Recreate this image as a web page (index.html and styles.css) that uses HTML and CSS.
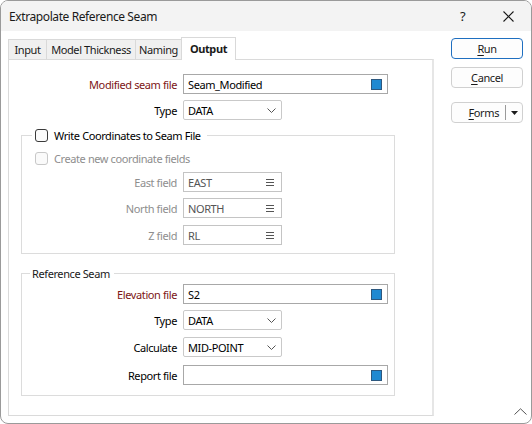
FILE: index.html
```html
<!DOCTYPE html>
<html>
<head>
<meta charset="utf-8">
<title>Extrapolate Reference Seam</title>
<link rel="stylesheet" href="styles.css">
</head>
<body>
<div class="window">
  <div class="titlebar">
    <span class="title">Extrapolate Reference Seam</span>
    <span class="tb-help">?</span>
    <span class="tb-close"><svg width="11" height="11" viewBox="0 0 11 11"><path d="M0.5 0.5 L10.5 10.5 M10.5 0.5 L0.5 10.5" stroke="#1a1a1a" stroke-width="1.1" fill="none"/></svg></span>
  </div>
  <div class="client">
    <div class="main">
      <div class="tabs">
        <div class="tab t-input">Input</div>
        <div class="tab t-model">Model Thickness</div>
        <div class="tab t-naming">Naming</div>
        <div class="tab t-output active">Output</div>
      </div>
      <div class="panel">
        <div class="row r1">
          <span class="lbl req">Modified seam file</span>
          <div class="file"><span class="val">Seam_Modified</span><i class="browse"></i></div>
        </div>
        <div class="row r2">
          <span class="lbl">Type</span>
          <div class="select"><span class="val">DATA</span><svg class="chev" width="9" height="5" viewBox="0 0 9 5"><path d="M0.5 0.5 L4.5 4.5 L8.5 0.5" stroke="#555" fill="none"/></svg></div>
        </div>

        <fieldset class="group g1">
          <legend class="legend chk-legend"><span class="cb"></span><span>Write Coordinates to Seam File</span></legend>
          <div class="cbrow disabled"><span class="cb"></span><span>Create new coordinate fields</span></div>
          <div class="row g-row e-row">
            <span class="lbl glbl dis">East field</span>
            <div class="fld"><span class="val">EAST</span><svg class="list" width="8" height="7" viewBox="0 0 8 7"><path d="M0 0.5H8M0 3.5H8M0 6.5H8" stroke="#555" fill="none"/></svg></div>
          </div>
          <div class="row g-row n-row">
            <span class="lbl glbl dis">North field</span>
            <div class="fld"><span class="val">NORTH</span><svg class="list" width="8" height="7" viewBox="0 0 8 7"><path d="M0 0.5H8M0 3.5H8M0 6.5H8" stroke="#555" fill="none"/></svg></div>
          </div>
          <div class="row g-row z-row">
            <span class="lbl glbl dis">Z field</span>
            <div class="fld"><span class="val">RL</span><svg class="list" width="8" height="7" viewBox="0 0 8 7"><path d="M0 0.5H8M0 3.5H8M0 6.5H8" stroke="#555" fill="none"/></svg></div>
          </div>
        </fieldset>

        <fieldset class="group g2">
          <legend class="legend txt-legend">Reference Seam</legend>
          <div class="row g-row el-row">
            <span class="lbl glbl req">Elevation file</span>
            <div class="file"><span class="val">S2</span><i class="browse"></i></div>
          </div>
          <div class="row g-row ty-row">
            <span class="lbl glbl">Type</span>
            <div class="select"><span class="val">DATA</span><svg class="chev" width="9" height="5" viewBox="0 0 9 5"><path d="M0.5 0.5 L4.5 4.5 L8.5 0.5" stroke="#555" fill="none"/></svg></div>
          </div>
          <div class="row g-row ca-row">
            <span class="lbl glbl">Calculate</span>
            <div class="select"><span class="val">MID-POINT</span><svg class="chev" width="9" height="5" viewBox="0 0 9 5"><path d="M0.5 0.5 L4.5 4.5 L8.5 0.5" stroke="#555" fill="none"/></svg></div>
          </div>
          <div class="row g-row re-row">
            <span class="lbl glbl">Report file</span>
            <div class="file"><span class="val"></span><i class="browse"></i></div>
          </div>
        </fieldset>
      </div>
    </div>
    <div class="buttons">
      <div class="btn default"><u>R</u>un</div>
      <div class="btn cancel"><u>C</u>ancel</div>
      <div class="btn forms"><span class="forms-main"><u>F</u>orms</span><span class="forms-sep"></span><span class="forms-arrow"><svg width="7" height="4" viewBox="0 0 7 4"><path d="M0 0 H7 L3.5 4 Z" fill="#1a1a1a"/></svg></span></div>
    </div>
  </div>
  <svg class="grip" width="13" height="7" viewBox="0 0 13 7"><path d="M0.5 6.5 L6.5 0.8 L12.5 6.5" stroke="#555" fill="none"/></svg>
</div>
</body>
</html>
```
FILE: styles.css
```css
* { box-sizing: border-box; }
html, body { margin: 0; padding: 0; }
body {
  width: 532px;
  height: 424px;
  overflow: hidden;
  background: #ffffff;
  font-family: "Noto Sans", "Open Sans", sans-serif;
  font-size: 11px;
  letter-spacing: -0.4px;
  color: #000;
}
.window {
  position: relative;
  width: 532px;
  height: 424px;
  border: 1px solid #9a9a9a;
  border-radius: 8px;
  overflow: hidden;
  background: #fff;
}
.titlebar {
  height: 30px;
  background: #f3f3f3;
  display: flex;
  align-items: center;
  padding-left: 8px;
}
.title { flex: 1; font-size: 12px; letter-spacing: -0.4px; color: #1a1a1a; }
.tb-help { width: 12px; margin-right: 31px; font-size: 13px; letter-spacing: 0; color: #1a1a1a; }
.tb-close { width: 11px; height: 11px; margin-right: 17px; display: flex; }

.client {
  display: flex;
  padding: 6px 0 0 7px;
}
.main { width: 426px; display: flex; flex-direction: column; }
.tabs { display: flex; align-items: flex-end; height: 22px; }
.tab {
  height: 20px;
  border: 1px solid #d9d9d9;
  border-bottom: none;
  background: #f0f0f0;
  margin-left: -1px;
  text-align: center;
  line-height: 19px;
  white-space: nowrap;
  color: #1a1a1a;
}
.t-input { width: 39px; margin-left: 0; }
.t-model { width: 90px; }
.t-naming { width: 47px; }
.t-output { width: 55px; }
.tab.active {
  height: 23px;
  background: #fff;
  font-weight: bold;
  margin-bottom: -1px;
  position: relative;
  z-index: 1;
  line-height: 21px;
}
.panel {
  height: 357px;
  border: 1px solid #dadada;
  border-right: 2px solid #e6e6e6;
  padding-top: 14px;
}
.row { display: flex; align-items: center; height: 20px; }
.r2 { margin-top: 6px; }
.lbl {
  width: 168px;
  margin-right: 6px;
  text-align: right;
  white-space: nowrap;
}
.glbl { width: 155px; }
.req { color: #7d1515; }
.dis { color: #8e8e8e; }

.file {
  width: 205px;
  height: 20px;
  border: 1px solid #a8a8a8;
  display: flex;
  align-items: center;
  padding-left: 4px;
  padding-right: 5px;
}
.val { flex: 1; white-space: nowrap; }
.browse {
  width: 11px;
  height: 11px;
  background: #2089d1;
  border: 1px solid #2d587f;
}
.select, .fld {
  width: 99px;
  height: 20px;
  border: 1px solid #c9c9c9;
  border-radius: 2px;
  display: flex;
  align-items: center;
  padding-left: 4px;
  padding-right: 5px;
}
.fld { border-color: #c4c4c4; border-radius: 0; padding-right: 7px; }
.fld .val { color: #555; }

.group {
  margin: 7px 0 0 12px;
  width: 374px;
  border: 1px solid #dcdcdc;
  padding: 0;
  min-width: 0;
}
.legend {
  margin-left: 10px;
  padding: 0 6px 0 3px;
  height: 16px;
  display: flex;
  align-items: center;
}
.txt-legend { margin-left: 8px; padding: 0 4px 0 2px; color: #1a1a1a; }
.cb {
  width: 13px;
  height: 13px;
  border: 1px solid #3a3a3a;
  border-radius: 3px;
  background: #fbfbfb;
  margin-right: 6px;
}
.cbrow {
  display: flex;
  align-items: center;
  height: 16px;
  margin: 7px 0 0 13px;
}
.cbrow.disabled { color: #8e8e8e; }
.cbrow.disabled .cb { border-color: #c8c8c8; background: #fafafa; }

.g1 { padding-bottom: 8px; }
.e-row { margin-top: 6px; }
.n-row { margin-top: 6px; }
.z-row { margin-top: 7px; }

.g2 { margin-top: 11px; padding-bottom: 10px; }
.el-row { margin-top: 3px; }
.ty-row { margin-top: 6px; }
.ca-row { margin-top: 7px; }
.re-row { margin-top: 8px; }

.buttons {
  margin-left: 17px;
  margin-top: 1px;
  width: 72px;
  display: flex;
  flex-direction: column;
}
.btn {
  height: 21px;
  border: 1px solid #d0d0d0;
  border-radius: 4px;
  background: #fdfdfd;
  text-align: center;
  line-height: 19px;
  color: #1a1a1a;
}
.btn.default { border-color: #1f6fc0; }
.cancel { margin-top: 8px; }
.forms { margin-top: 14px; display: flex; align-items: center; }
.forms-main { flex: 1; text-align: right; padding-right: 6px; }
.forms-sep { width: 1px; height: 15px; background: #9a9a9a; }
.forms-arrow { width: 16px; display: flex; justify-content: center; }
u { text-decoration: underline; text-underline-offset: 2px; }

.grip { position: absolute; right: 4px; bottom: 8px; }
```
